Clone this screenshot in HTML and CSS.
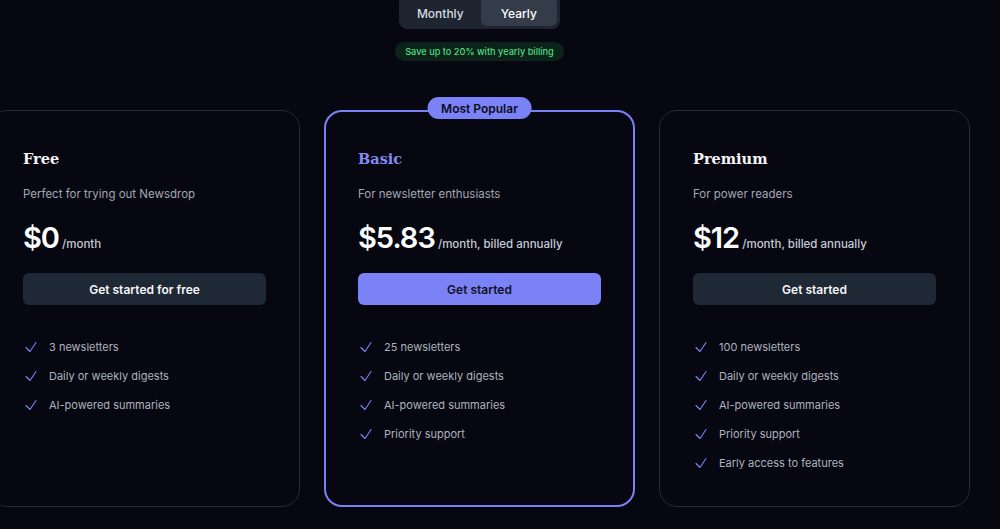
FILE: index.html
```html
<!DOCTYPE html>
<html lang="en">
<head>
<meta charset="utf-8">
<title>Pricing</title>
<link rel="stylesheet" href="styles.css">
</head>
<body>
<div class="page">
  <div class="toggle">
    <button class="tab">Monthly</button>
    <button class="tab active">Yearly</button>
  </div>
  <div class="save">Save up to 20% with yearly billing</div>
  <div class="cards">
    <div class="card">
      <h3 class="title">Free</h3>
      <p class="desc">Perfect for trying out Newsdrop</p>
      <div class="price"><span class="amount">$0</span><span class="per">/month</span></div>
      <button class="cta">Get started for free</button>
      <ul class="features">
        <li><svg class="check" viewBox="0 0 24 24"><path d="M4.5 12.75l6 6 9-13.5"/></svg>3 newsletters</li>
        <li><svg class="check" viewBox="0 0 24 24"><path d="M4.5 12.75l6 6 9-13.5"/></svg>Daily or weekly digests</li>
        <li><svg class="check" viewBox="0 0 24 24"><path d="M4.5 12.75l6 6 9-13.5"/></svg>AI-powered summaries</li>
      </ul>
    </div>
    <div class="card popular">
      <span class="badge">Most Popular</span>
      <h3 class="title accent">Basic</h3>
      <p class="desc">For newsletter enthusiasts</p>
      <div class="price"><span class="amount">$5.83</span><span class="per">/month, billed annually</span></div>
      <button class="cta primary">Get started</button>
      <ul class="features">
        <li><svg class="check" viewBox="0 0 24 24"><path d="M4.5 12.75l6 6 9-13.5"/></svg>25 newsletters</li>
        <li><svg class="check" viewBox="0 0 24 24"><path d="M4.5 12.75l6 6 9-13.5"/></svg>Daily or weekly digests</li>
        <li><svg class="check" viewBox="0 0 24 24"><path d="M4.5 12.75l6 6 9-13.5"/></svg>AI-powered summaries</li>
        <li><svg class="check" viewBox="0 0 24 24"><path d="M4.5 12.75l6 6 9-13.5"/></svg>Priority support</li>
      </ul>
    </div>
    <div class="card">
      <h3 class="title">Premium</h3>
      <p class="desc">For power readers</p>
      <div class="price"><span class="amount">$12</span><span class="per">/month, billed annually</span></div>
      <button class="cta">Get started</button>
      <ul class="features">
        <li><svg class="check" viewBox="0 0 24 24"><path d="M4.5 12.75l6 6 9-13.5"/></svg>100 newsletters</li>
        <li><svg class="check" viewBox="0 0 24 24"><path d="M4.5 12.75l6 6 9-13.5"/></svg>Daily or weekly digests</li>
        <li><svg class="check" viewBox="0 0 24 24"><path d="M4.5 12.75l6 6 9-13.5"/></svg>AI-powered summaries</li>
        <li><svg class="check" viewBox="0 0 24 24"><path d="M4.5 12.75l6 6 9-13.5"/></svg>Priority support</li>
        <li><svg class="check" viewBox="0 0 24 24"><path d="M4.5 12.75l6 6 9-13.5"/></svg>Early access to features</li>
      </ul>
    </div>
  </div>
</div>
</body>
</html>
```

FILE: styles.css
```css
* { box-sizing: border-box; }
html, body {
  margin: 0;
  height: 100%;
  background: #060711;
  overflow: hidden;
}
body {
  font-family: Inter, "Noto Sans", sans-serif;
  color: #e5e7eb;
}
.page {
  width: 959px;
  display: flex;
  flex-direction: column;
  align-items: center;
}
.toggle {
  margin-top: -6px;
  display: flex;
  gap: 2px;
  padding: 3px;
  background: #1e2430;
  border-radius: 8px;
  width: 161px;
}
.tab {
  flex: 1;
  height: 29px;
  padding-top: 4px;
  border: 0;
  border-radius: 6px;
  background: transparent;
  color: #d6dae1;
  font-family: inherit;
  font-size: 12px;
  font-weight: 500;
}
.tab.active {
  background: #343c4a;
  color: #ffffff;
}
.save {
  margin-top: 13px;
  height: 19px;
  padding: 0 10px;
  display: flex;
  align-items: center;
  border-radius: 10px;
  background: #0c2319;
  color: #4ade80;
  font-size: 9.2px;
  font-weight: 500;
}
.cards {
  margin-top: 49px;
  display: flex;
  justify-content: center;
  gap: 24px;
  width: 100%;
}
.card {
  position: relative;
  flex: 0 0 311px;
  height: 397px;
  padding: 39px 33px 0;
  border: 1px solid #272c37;
  border-radius: 18px;
  background: #060711;
}
.card.popular {
  border: 2px solid #7b82f6;
  padding: 38px 32px 0;
}
.badge {
  position: absolute;
  top: -15px;
  left: 50%;
  transform: translateX(-50%);
  height: 22px;
  padding: 0 14px;
  display: flex;
  align-items: center;
  border-radius: 11px;
  background: #7b82f6;
  color: #0b0e1c;
  font-size: 12px;
  font-weight: 600;
  white-space: nowrap;
}
.title {
  margin: 0;
  font-family: "DejaVu Serif", "Liberation Serif", serif;
  font-size: 14.5px;
  font-weight: 700;
  line-height: 18px;
  color: #f3f4f6;
}
.title.accent { color: #858bf3; }
.desc {
  margin: 18px 0 0;
  font-size: 11.5px;
  line-height: 16px;
  color: #a3a8b2;
}
.price {
  margin-top: 16px;
  display: flex;
  align-items: baseline;
  gap: 3px;
}
.amount {
  font-size: 29px;
  font-weight: 600;
  letter-spacing: -1px;
  line-height: 40px;
  color: #ffffff;
}
.per {
  font-size: 11.5px;
  font-weight: 500;
  color: #c7ccd5;
}
.cta {
  margin-top: 15px;
  width: 243px;
  height: 32px;
  border: 0;
  border-radius: 6px;
  background: #1f2835;
  color: #f5f6f8;
  font-family: inherit;
  font-size: 12px;
  font-weight: 600;
}
.cta.primary {
  background: #7b82f6;
  color: #0f1222;
}
.features {
  list-style: none;
  margin: 34px 0 0;
  padding: 0;
  display: flex;
  flex-direction: column;
  gap: 13px;
}
.features li {
  display: flex;
  align-items: center;
  gap: 10px;
  font-size: 11px;
  line-height: 16px;
  color: #aeb3bd;
}
.check {
  width: 16px;
  height: 16px;
  fill: none;
  stroke: #8088fa;
  stroke-width: 1.6;
  stroke-linecap: round;
  stroke-linejoin: round;
}
```
